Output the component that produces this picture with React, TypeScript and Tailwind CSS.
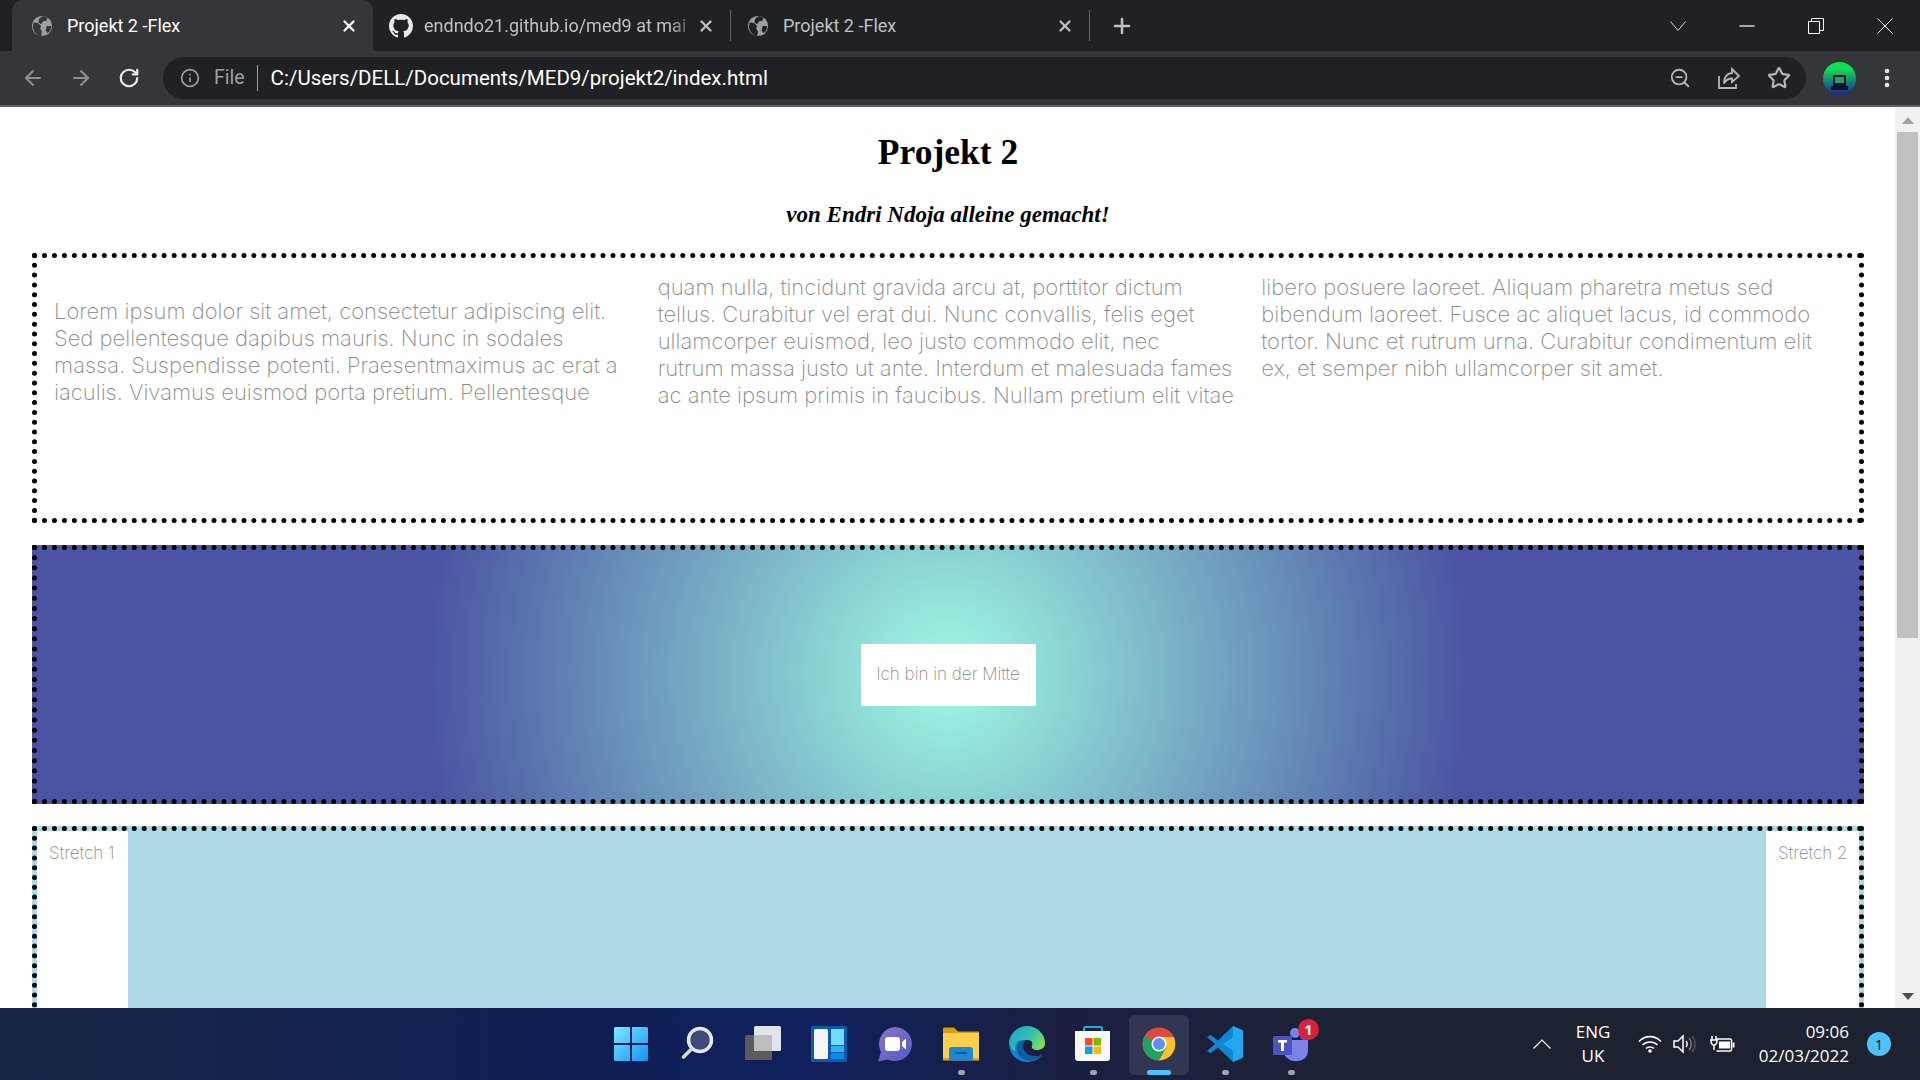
import React from "react";
import { ArrowLeft, ArrowRight, RotateCw, Info, ZoomOut, Star, X, Plus, MoreVertical } from "lucide-react";

const GithubMark = () => (
  <svg viewBox="0 0 16 16" className="h-6 w-6 shrink-0" fill="#e8eaed">
    <path d="M8 0C3.58 0 0 3.58 0 8c0 3.54 2.29 6.53 5.47 7.59.4.07.55-.17.55-.38 0-.19-.01-.82-.01-1.49-2.01.37-2.53-.49-2.69-.94-.09-.23-.48-.94-.82-1.13-.28-.15-.68-.52-.01-.53.63-.01 1.08.58 1.23.82.72 1.21 1.87.87 2.33.66.07-.52.28-.87.51-1.07-1.78-.2-3.64-.89-3.64-3.95 0-.87.31-1.59.82-2.15-.08-.2-.36-1.02.08-2.12 0 0 .67-.21 2.2.82.64-.18 1.32-.27 2-.27s1.36.09 2 .27c1.53-1.04 2.2-.82 2.2-.82.44 1.1.16 1.92.08 2.12.51.56.82 1.27.82 2.15 0 3.07-1.87 3.75-3.65 3.95.29.25.54.73.54 1.48 0 1.07-.01 1.93-.01 2.2 0 .21.15.46.55.38A8.01 8.01 0 0 0 16 8c0-4.42-3.58-8-8-8z" />
  </svg>
);

const GlobeIcon = ({ bg }: { bg: string }) => (
  <svg viewBox="0 0 24 24" className="h-[22px] w-[22px] shrink-0">
    <circle cx="12" cy="12" r="11" fill="#9aa0a6" />
    <path d="M3 8l5 1 3 3-1 3 2 3-1 5c-5-1-8-5-9-10zM13 1l5 2-1 3-4 1-2 3-3-2 1-4zM17 12l5 0c0 3-1 6-4 8l-2-3z" fill={bg} />
  </svg>
);

const Tab = ({ title, active, icon, w, fade }: { title: string; active?: boolean; icon: React.ReactNode; w: string; fade?: boolean }) => (
  <div
    className={
      active
        ? `flex h-[51px] ${w} items-center rounded-t-[10px] bg-[#35363a] pr-[15px] pl-[19px] text-white`
        : `flex h-[51px] ${w} items-center pr-[15px] pl-[16px] text-[#bdc1c6]`
    }
  >
    {icon}
    <span className={fade ? "ml-[11px] flex-1 text-[18px] whitespace-nowrap [mask-image:linear-gradient(90deg,#000_90%,transparent)]" : "ml-[14px] flex-1 text-[18px] whitespace-nowrap"}>
      {title}
    </span>
    <X size={18} strokeWidth={3} className={active ? "text-white" : "text-[#bdc1c6]"} />
  </div>
);

const ChromeBar = () => (
  <div className="shrink-0 font-['Roboto',sans-serif]">
    <div className="flex h-[51px] items-center bg-[#202124] pl-3">
      <Tab title="Projekt 2 -Flex" active w="w-[361px]" icon={<GlobeIcon bg="#35363a" />} />
      <Tab title="endndo21.github.io/med9 at mai" w="w-[357px]" icon={<GithubMark />} fade />
      <div className="h-[31px] w-px bg-[#5f6368]" />
      <Tab title="Projekt 2 -Flex" w="w-[358px]" icon={<GlobeIcon bg="#202124" />} />
      <div className="h-[31px] w-px bg-[#5f6368]" />
      <Plus size={24} strokeWidth={2.5} className="ml-5 text-[#bdc1c6]" />
      <div className="ml-auto flex items-center gap-[45px] pr-[23px]">
        <svg viewBox="0 0 24 24" className="h-6 w-6" fill="none" stroke="#dadce0" strokeWidth="1">
          <path d="M4.500 7.500l7.500 9 7.500-9" />
        </svg>
        <svg viewBox="0 0 24 24" className="h-6 w-6" fill="none" stroke="#fff" strokeWidth="1.200">
          <path d="M4.500 12h15" />
        </svg>
        <svg viewBox="0 0 24 24" className="h-6 w-6" fill="none" stroke="#fff" strokeWidth="1">
          <path d="M4.500 7.500h11v12h-11zM7.500 7.500v-3h12v12h-4" />
        </svg>
        <svg viewBox="0 0 24 24" className="h-6 w-6" fill="none" stroke="#fff" strokeWidth="1">
          <path d="M4.500 4.500l15 15M19.500 4.500l-15 15" />
        </svg>
      </div>
    </div>
    <div className="flex h-[54px] items-center bg-[#35363a] pl-[21px]">
      <ArrowLeft size={24} className="text-[#8b8e92]" />
      <ArrowRight size={24} className="ml-[24px] text-[#8b8e92]" />
      <RotateCw size={22} strokeWidth={2.4} className="ml-[25px] text-[#e8eaed]" />
      <div className="ml-[23px] flex h-[42px] w-[1643px] items-center rounded-full bg-[#202124] pr-[15px] pl-[16px]">
        <Info size={20} className="ml-[1px] text-[#9aa0a6]" />
        <span className="ml-[14px] text-[19.500px] text-[#9aa0a6]">File</span>
        <div className="ml-[12px] h-[26px] w-px bg-[#9aa0a6]" />
        <span className="ml-[13px] text-[20.500px] text-white">C:/Users/DELL/Documents/MED9/projekt2/index.html</span>
        <div className="ml-auto flex items-center gap-[26px] text-[#b4b6b9]">
          <ZoomOut size={22} strokeWidth={2} />
          <svg viewBox="0 0 24 24" className="h-[24px] w-[24px]" fill="none" stroke="#b4b6b9" strokeWidth="1.800">
            <path d="M2 10v12h17v-4" />
            <path d="M15 3l7 7-7 6v-3.500c-4 0-6 1-8 5 0-6 3-10 8-10.500z" />
          </svg>
          <Star size={24} strokeWidth={2.2} />
        </div>
      </div>
      <svg viewBox="0 0 33 33" className="ml-[17px] h-[33px] w-[33px] shrink-0">
        <defs>
          <linearGradient id="av" x1="0" y1="0" x2="0" y2="1">
            <stop offset="0.2" stopColor="#0ce255" />
            <stop offset="1" stopColor="#22209a" />
          </linearGradient>
        </defs>
        <circle cx="16.500" cy="16.500" r="16.500" fill="url(#av)" />
        <circle cx="16.500" cy="10" r="2" fill="#7a8a80" />
        <rect x="10" y="13" width="13" height="11" fill="#0b1520" />
        <rect x="12" y="15" width="9" height="6" fill="#22a07a" />
        <rect x="8" y="24" width="17" height="4" fill="#0b1520" />
      </svg>
      <MoreVertical size={24} strokeWidth={2.6} className="ml-[19px] text-[#e8eaed]" />
    </div>
    <div className="h-[2px] bg-[#5f6368]" />
  </div>
);

const lines = [
  ["Lorem ipsum dolor sit amet, consectetur adipiscing elit.", "Sed pellentesque dapibus mauris. Nunc in sodales", "massa. Suspendisse potenti. Praesentmaximus ac erat a", "iaculis. Vivamus euismod porta pretium. Pellentesque"],
  ["quam nulla, tincidunt gravida arcu at, porttitor dictum", "tellus. Curabitur vel erat dui. Nunc convallis, felis eget", "ullamcorper euismod, leo justo commodo elit, nec", "rutrum massa justo ut ante. Interdum et malesuada fames", "ac ante ipsum primis in faucibus. Nullam pretium elit vitae"],
  ["libero posuere laoreet. Aliquam pharetra metus sed", "bibendum laoreet. Fusce ac aliquet lacus, id commodo", "tortor. Nunc et rutrum urna. Curabitur condimentum elit", "ex, et semper nibh ullamcorper sit amet."],
];

const Page = () => (
  <div className="min-w-0 flex-1 overflow-hidden bg-white">
    <div className="pr-[31px] pl-8 font-['Inter',sans-serif] font-extralight text-[#8a8a8a]">
      <h1 className="mt-[24px] text-center font-['Liberation_Serif',serif] text-[35.5px] leading-[42px] font-bold text-black">Projekt 2</h1>
      <h2 className="mt-[27px] text-center font-['Liberation_Serif',serif] text-[23px] leading-[30px] font-bold text-black italic">von Endri Ndoja alleine gemacht!</h2>
      <section className="mt-[23px] h-[270px] border-[5px] border-dotted border-black px-[17px] pt-[16px]">
        <div className="grid grid-cols-3 gap-x-[23px] text-[22px] leading-[27px]">
          {lines.map((col, i) => (
            <div key={i} className={i === 0 ? "pt-[24px]" : ""}>
              {col.map((l) => (
                <div key={l} className="whitespace-nowrap">{l}</div>
              ))}
            </div>
          ))}
        </div>
      </section>
      <section className="mt-[22px] flex h-[259px] items-center justify-center border-[5px] border-dotted border-black bg-[radial-gradient(circle,#9ffae2_0%,#4a54a2_57%)]">
        <div className="flex h-[62px] w-[175px] items-center justify-center bg-white text-[17px]">Ich bin in der Mitte</div>
      </section>
      <section className="mt-[22px] flex h-[260px] justify-between border-[5px] border-dotted border-black bg-[#add8e6] text-[17px] leading-[22px]">
        <div className="w-[91px] bg-white pt-[11px] pl-[12px]">Stretch 1</div>
        <div className="w-[93px] bg-white pt-[11px] pl-[12px]">Stretch 2</div>
      </section>
    </div>
  </div>
);

const Scrollbar = () => (
  <div className="flex w-[25px] shrink-0 flex-col items-center bg-[#f1f1f1] pt-[10px]">
    <div className="h-0 w-0 border-x-[6px] border-b-[7px] border-x-transparent border-b-[#a3a3a3]" />
    <div className="mt-[8px] h-[506px] w-[21px] bg-[#c1c1c1]" />
    <div className="mt-auto mb-[8px] h-0 w-0 border-x-[6px] border-t-[7px] border-x-transparent border-t-[#505050]" />
  </div>
);

const StartIcon = () => (
  <svg viewBox="0 0 36 36" className="h-9 w-9">
    <defs>
      <linearGradient id="st" x1="0" y1="0" x2="1" y2="1">
        <stop offset="0" stopColor="#7fe9ff" />
        <stop offset="1" stopColor="#0f93f5" />
      </linearGradient>
    </defs>
    <path d="M1 2.500A1.500 1.500 0 0 1 2.500 1H17v16H1zM19 1h14.500A1.500 1.500 0 0 1 35 2.500V17H19zM1 19h16v16H2.500A1.500 1.500 0 0 1 1 33.500zM19 19h16v14.500a1.500 1.500 0 0 1-1.500 1.500H19z" fill="url(#st)" />
  </svg>
);

const SearchIcon = () => (
  <svg viewBox="0 0 36 36" className="h-9 w-9">
    <circle cx="21" cy="14" r="11.500" fill="#3f4b7d" stroke="#e6e6e6" strokeWidth="3.500" />
    <path d="M12.500 23l-8 8" stroke="#d8d8d8" strokeWidth="3.500" strokeLinecap="round" />
  </svg>
);

const TaskViewIcon = () => (
  <svg viewBox="0 0 36 36" className="h-9 w-9">
    <rect x="0" y="9" width="27" height="25" rx="1.500" fill="#5c5c5c" />
    <rect x="9" y="0" width="27" height="25" rx="1.500" fill="#fff" fillOpacity="0.88" />
    <rect x="9" y="9" width="18" height="16" fill="#bdbdbd" />
  </svg>
);

const WidgetsIcon = () => (
  <svg viewBox="0 0 36 36" className="h-9 w-9">
    <rect x="0" y="0" width="36" height="36" rx="1.500" fill="#0a5cab" />
    <rect x="3" y="3" width="14" height="30" rx="1.500" fill="#f4f4f4" />
    <rect x="20" y="3" width="13" height="16" fill="#6fdcff" />
    <rect x="20" y="20" width="13" height="6" fill="#2fb0f5" />
    <rect x="20" y="27" width="13" height="6" fill="#0a8ce8" />
  </svg>
);

const ChatIcon = () => (
  <svg viewBox="0 0 36 36" className="h-9 w-9">
    <defs>
      <linearGradient id="ch" x1="0" y1="0" x2="1" y2="1">
        <stop offset="0" stopColor="#8f74c7" />
        <stop offset="1" stopColor="#4b5bc4" />
      </linearGradient>
    </defs>
    <path d="M18 1a17 17 0 1 1-7 32.500L1 35.500l3-9.500A17 17 0 0 1 18 1z" fill="url(#ch)" />
    <rect x="8" y="11" width="15" height="14" rx="3" fill="#fff" />
    <path d="M25 16l4-3.500v11L25 20z" fill="#fff" />
  </svg>
);

const FolderIcon = () => (
  <svg viewBox="0 0 36 36" className="h-9 w-9">
    <path d="M0 3a1.500 1.500 0 0 1 1.500-1.500H11l4 4H36V12H0z" fill="#d79c10" />
    <path d="M0 7h36v27H0z" fill="#fcd04f" />
    <path d="M0 32h36v2.500H0z" fill="#e8a90f" />
    <path d="M6 34.500V24a3 3 0 0 1 3-3h18a3 3 0 0 1 3 3v10.500z" fill="#1e88d8" />
    <rect x="12" y="26" width="12" height="2" fill="#0b5fa8" />
  </svg>
);

const EdgeIcon = () => (
  <svg viewBox="0 0 36 36" className="h-9 w-9">
    <defs>
      <linearGradient id="ed1" x1="0" y1="0" x2="1" y2="0.600">
        <stop offset="0" stopColor="#1a9fd8" />
        <stop offset="0.6" stopColor="#35c1a8" />
        <stop offset="1" stopColor="#7fe05a" />
      </linearGradient>
    </defs>
    <path d="M18 0C28 0 36 8 36 17c0 5-4 7-8 7s-6-2-5-5c1-2 0-5-5-5C10 14 5 20 7 27 2 24 0 20 0 16 1 7 9 0 18 0z" fill="url(#ed1)" />
    <path d="M0 17c0 11 8 19 18 19 6 0 11-2 15-7-5 2-12 2-16-2-4-4-4-9-1-12C9 12 4 18 7 27 3 25 1 21 0 17z" fill="#1481ca" />
    <path d="M16 15c-3 3-3 8 1 12 4 4 11 4 16 2-3 3-7 5-11 6-6 0-13-4-14-11-1-5 3-10 8-9z" fill="#0c5ba3" />
  </svg>
);

const StoreIcon = () => (
  <svg viewBox="0 0 36 36" className="h-9 w-9">
    <path d="M9 6V2.500A1.500 1.500 0 0 1 10.500 1h15A1.500 1.500 0 0 1 27 2.500V6" fill="none" stroke="#2aa7e0" strokeWidth="2" />
    <path d="M0 5h35v27a3 3 0 0 1-3 3H3a3 3 0 0 1-3-3z" fill="#f8f8f8" />
    <rect x="10" y="12" width="7.500" height="7.500" fill="#f25022" />
    <rect x="18.500" y="12" width="7.500" height="7.500" fill="#7fba00" />
    <rect x="10" y="20.500" width="7.500" height="7.500" fill="#00a4ef" />
    <rect x="18.500" y="20.500" width="7.500" height="7.500" fill="#ffb900" />
  </svg>
);

const ChromeIcon = () => (
  <svg viewBox="0 0 36 36" className="h-[34px] w-[34px]">
    <circle cx="18" cy="18" r="17.500" fill="#dd4b3e" />
    <path d="M18 18L3 9.500A17.500 17.500 0 0 0 18 35.500L26 21z" fill="#1fa463" />
    <path d="M18 10.500h15.500A17.500 17.500 0 0 1 18 35.500L26 21z" fill="#f7c32e" />
    <circle cx="18" cy="18" r="8" fill="#fff" />
    <circle cx="18" cy="18" r="6.300" fill="#5b91f0" />
  </svg>
);

const VsCodeIcon = () => (
  <svg viewBox="0 0 36 36" className="h-9 w-9">
    <path d="M26 0l10 4.500v27L26 36 11 21.500 3.500 27 0 25l8-7-8-7 3.500-2L11 14.500z" fill="#0e88d3" />
    <path d="M26 0l10 4.500v27L26 36V25L16 18 26 11z" fill="#22a7f0" />
  </svg>
);

const TeamsIcon = () => (
  <div className="relative h-9 w-9">
    <svg viewBox="0 0 36 36" className="h-9 w-9">
      <circle cx="22" cy="7" r="5" fill="#7b83eb" />
      <circle cx="31" cy="10" r="4" fill="#5059c9" />
      <path d="M10 14h25v11a10 10 0 0 1-10 10h-3a12 12 0 0 1-12-12z" fill="#7b83eb" />
      <rect x="0" y="10" width="19" height="19" rx="1.500" fill="#4b53bc" />
      <path d="M5 14h9v2.500h-3V25H8v-8.500H5z" fill="#fff" />
    </svg>
    <div className="absolute -top-[7px] -right-[10px] flex h-[21px] w-[21px] items-center justify-center rounded-full bg-[#d9213b] text-[14px] font-bold text-white">1</div>
  </div>
);

const apps: { icon: React.ReactNode; dot?: boolean; active?: boolean }[] = [
  { icon: <StartIcon /> },
  { icon: <SearchIcon /> },
  { icon: <TaskViewIcon /> },
  { icon: <WidgetsIcon /> },
  { icon: <ChatIcon /> },
  { icon: <FolderIcon />, dot: true },
  { icon: <EdgeIcon /> },
  { icon: <StoreIcon />, dot: true },
  { icon: <ChromeIcon />, active: true },
  { icon: <VsCodeIcon />, dot: true },
  { icon: <TeamsIcon />, dot: true },
];

const Taskbar = () => (
  <div className="flex h-[72px] shrink-0 items-center bg-[linear-gradient(90deg,#1a2444_0%,#0f1f55_32%,#10205c_42%,#1a1f42_55%,#1c2230_75%,#1c2230_100%)] font-['Open_Sans',sans-serif] text-white">
    <div className="ml-[598px] flex">
      {apps.map((a, i) => (
        <div key={i} className="relative flex h-[72px] w-[66px] items-center justify-center pb-[1px]">
          {a.active && <div className="absolute top-[7px] left-[3px] h-[60px] w-[60px] rounded-md bg-white/10" />}
          <div className="relative">{a.icon}</div>
          {a.dot && <div className="absolute bottom-[5px] left-[30px] h-[5px] w-[7px] rounded-full bg-[#a0a4b0]" />}
          {a.active && <div className="absolute bottom-[5px] left-[21px] h-[5px] w-[24px] rounded-full bg-[#4cc2ff]" />}
        </div>
      ))}
    </div>
    <svg viewBox="0 0 18 10" className="ml-[209px] h-[10px] w-[18px]" fill="none" stroke="#fff" strokeWidth="1.200">
      <path d="M0.500 9.500L9 1l8.500 8.500" />
    </svg>
    <div className="ml-[22px] w-[40px] text-center text-[17px] leading-[24px]">ENG<br />UK</div>
    <svg viewBox="0 0 24 18" className="ml-[25px] h-[18px] w-[24px]" fill="none" stroke="#fff" strokeWidth="1.600">
      <path d="M1 6.500c6-6.500 16-6.500 22 0M4.500 10c4-4 11-4 15 0M8 13.500c2-2 6-2 8 0" />
      <circle cx="12" cy="16" r="1.800" fill="#fff" stroke="none" />
    </svg>
    <svg viewBox="0 0 24 20" className="ml-[11px] h-[20px] w-[24px]" fill="none" stroke="#fff" strokeWidth="1.500">
      <path d="M1 7v6h4l5 5V2L5 7z" />
      <path d="M13 7c1.500 1.500 1.500 4.500 0 6" />
      <path d="M16 4c3 3 3 9 0 12" stroke="#7a7f8a" />
      <path d="M19 2c4 4 4 12 0 16" stroke="#4a4f5a" />
    </svg>
    <svg viewBox="0 0 26 20" className="ml-[12px] h-[20px] w-[26px]" fill="none" stroke="#fff" strokeWidth="1.500">
      <path d="M7 5h14a1.500 1.500 0 0 1 1.500 1.500v9A1.500 1.500 0 0 1 21 17H7.500" />
      <rect x="10" y="7.500" width="11" height="7" fill="#fff" stroke="none" />
      <rect x="23.500" y="8.500" width="2" height="5" fill="#fff" stroke="none" />
      <path d="M1 6h8M3 2v4M7 2v4M2 6c0 4 2 5 3 5s3-1 3-5M5 11v5" />
    </svg>
    <div className="ml-[22px] w-[92px] text-right text-[17px] leading-[24px] whitespace-nowrap">09:06<br />02/03/2022</div>
    <div className="ml-[18px] flex h-6 w-6 items-center justify-center rounded-full bg-[#4cc2ff] text-[14px] text-black">1</div>
  </div>
);

export default function App() {
  return (
    <div className="flex h-screen flex-col overflow-hidden">
      <ChromeBar />
      <div className="flex min-h-0 flex-1">
        <Page />
        <Scrollbar />
      </div>
      <Taskbar />
    </div>
  );
}
